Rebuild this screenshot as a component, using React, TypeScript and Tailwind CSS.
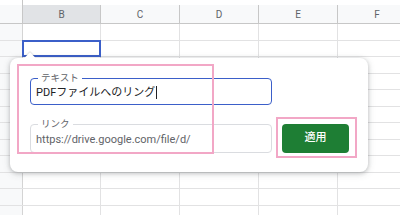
import React from 'react';

const cols = [
  { key: 'B', w: 'w-[78px]' },
  { key: 'C', w: 'w-[79px]' },
  { key: 'D', w: 'w-[79px]' },
  { key: 'E', w: 'w-[79px]' },
  { key: 'F', w: 'w-[79px]' },
];

const rows = Array.from({ length: 12 }, (_, i) => i);

function Sheet() {
  return (
    <div className="flex flex-col">
      {/* top strip */}
      <div className="flex h-[5px] bg-white">
        <div className="w-[23px] shrink-0 border-r border-[#c7c7c7]" />
        <div className="flex-1" />
      </div>
      {/* column headers */}
      <div className="flex h-[19px] border-b border-[#c7c7c7] bg-[#f8f9fa] text-[10px] text-[#5f6368]">
        <div className="w-[23px] shrink-0 border-r border-[#c7c7c7]" />
        {cols.map(c => (
          <div
            key={c.key}
            className={`${c.w} shrink-0 flex items-center justify-center border-r border-[#c7c7c7] ${c.key === 'B' ? 'bg-[#e1e3e6]' : ''}`}
          >
            {c.key}
          </div>
        ))}
      </div>
      {rows.map(r => (
        <div key={r} className="flex h-[16.5px] border-b border-[#e2e2e3]">
          <div className="w-[23px] shrink-0 border-r border-[#d4d4d4] bg-[#f8f9fa]" />
          {cols.map(c => (
            <div key={c.key} className={`${c.w} shrink-0 border-r border-[#e2e2e3] relative`}>
              {r === 1 && c.key === 'B' && (
                <div className="absolute -left-px -top-px -right-px -bottom-px border-2 border-[#3b5fc9]" />
              )}
            </div>
          ))}
        </div>
      ))}
    </div>
  );
}

function Field({ label, value, active }: { label: string; value: string; active?: boolean }) {
  return (
    <div
      className={`relative flex items-center rounded-[4px] px-[5px] ${
        active ? 'h-[27px] border-[1.5px] border-[#3b5fc9]' : 'h-[29px] border border-[#dadce0]'
      }`}
    >
      <span className="absolute -top-[8px] left-[7px] bg-white px-[3px] text-[9.5px] leading-[14px] text-[#5f6368]">
        {label}
      </span>
      <span className={`text-[11px] leading-none pt-[1px] ${active ? 'text-[#202124]' : 'text-[#5f6368]'}`}>
        {value}
      </span>
      {active && <span className="ml-px mt-[1px] h-[13px] w-px bg-[#202124]" />}
    </div>
  );
}

export default function App() {
  return (
    <div
      className="relative w-[400px] h-[215px] overflow-hidden bg-white"
      style={{ fontFamily: 'Roboto, "Noto Sans CJK JP", Arial, sans-serif' }}
    >
      <Sheet />

      {/* link dialog */}
      <div className="absolute left-[10px] top-[58px] w-[358px] h-[114px] rounded-[8px] bg-white shadow-[0_1px_4px_rgba(60,64,67,0.3),0_2px_8px_rgba(60,64,67,0.12)]">
        <div className="absolute -top-[4px] left-[16px] h-[8px] w-[8px] rotate-45 bg-white shadow-[-1px_-1px_1px_rgba(60,64,67,0.15)]" />
        <div className="relative grid grid-cols-[242px_67px] gap-x-[10px] gap-y-[19px] pl-[20px] pt-[20px]">
          <div className="col-span-1">
            <Field label="テキスト" value="PDFファイルへのリング" active />
          </div>
          <div />
          <Field label="リンク" value="https://drive.google.com/file/d/" />
          <button className="h-[29px] rounded-[4px] bg-[#1e7e34] text-[11px] font-medium text-white">
            適用
          </button>
        </div>

        {/* annotation boxes */}
        <div className="absolute left-[7px] top-[6px] h-[90px] w-[197px] border-2 border-[#f2a7c6]" />
        <div className="absolute left-[266px] top-[59px] h-[41px] w-[81px] border-2 border-[#f2a7c6]" />
      </div>
    </div>
  );
}
